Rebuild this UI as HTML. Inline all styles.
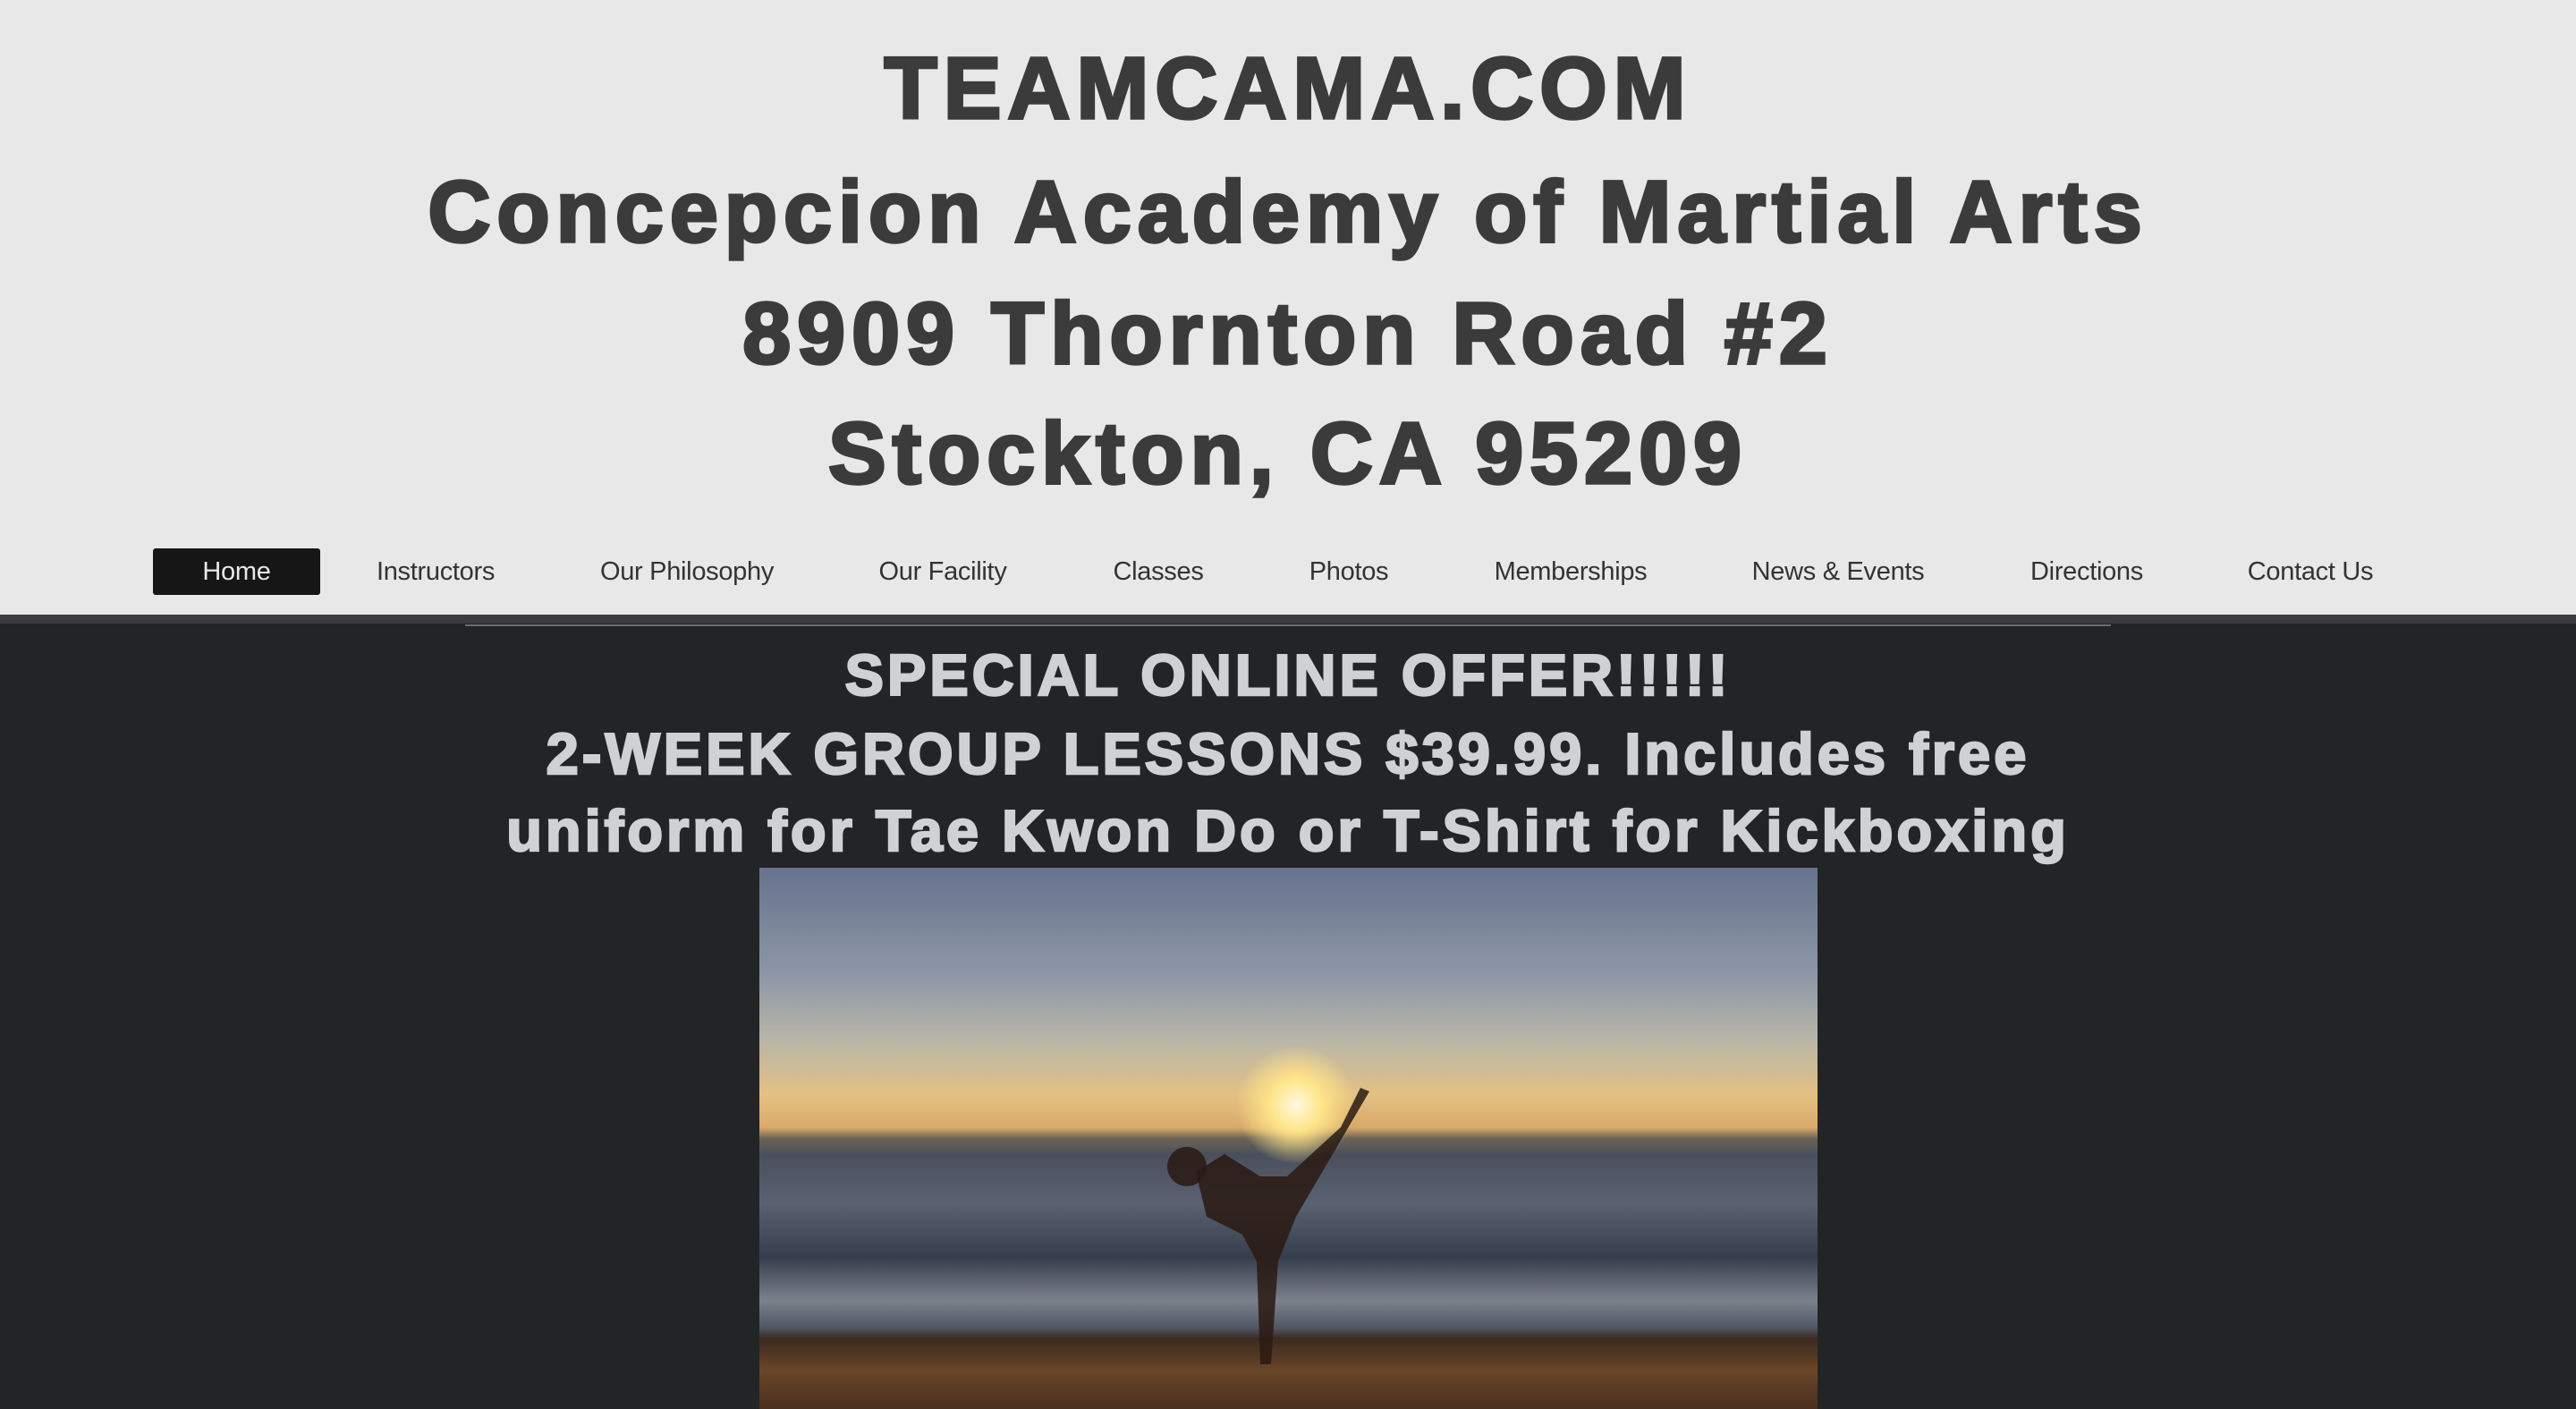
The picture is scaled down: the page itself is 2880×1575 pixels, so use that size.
<!DOCTYPE html>
<html><head><meta charset="utf-8"><style>
html,body{margin:0;padding:0;width:2880px;height:1575px;overflow:hidden;background:#232426;font-family:"Liberation Sans",Arial,sans-serif}
#hdr{position:absolute;left:0;top:0;width:2880px;height:687px;background:#e8e8e8}
.h{position:absolute;left:0;width:2880px;text-align:center;font-weight:bold;font-size:97px;color:#3b3b3b;-webkit-text-stroke:3.5px #3b3b3b;letter-spacing:7px;line-height:136px}
#stripe{position:absolute;left:0;top:687px;width:2880px;height:10px;background:#3a3c3f}
#hr{position:absolute;left:520px;top:698px;width:1840px;height:2px;background:#6a6b6e}
.n{position:absolute;top:613px;height:52px;line-height:52px;font-size:29px;color:#333;transform:translateX(-50%);white-space:nowrap;letter-spacing:-0.3px}
#home{left:171px;width:187px;background:#161616;color:#e8e8e8;border-radius:3px;text-align:center;transform:none}
.o{position:absolute;left:0;width:2880px;text-align:center;font-weight:bold;font-size:65px;color:#d0d1d3;-webkit-text-stroke:2.5px #d0d1d3;letter-spacing:4px;line-height:88px}
#img{position:absolute;left:849px;top:970px;width:1183px;height:605px;overflow:hidden;
background:linear-gradient(to bottom,#67738e 0%,#8d97a6 20%,#b9b6a8 32%,#e4c083 42%,#d9aa68 48%,#6d6456 50%,#4a4f5c 53%,#5a6272 62%,#363d4c 72%,#7c828c 80%,#505664 85%,#3a2a20 87%,#6a4628 93%,#4a3020 100%)}
</style></head><body>
<div id="hdr">
<div class="h" style="top:31px">TEAMCAMA.COM</div>
<div class="h" style="top:169px">Concepcion Academy of Martial Arts</div>
<div class="h" style="top:305px">8909 Thornton Road #2</div>
<div class="h" style="top:439px">Stockton, CA 95209</div>
<div class="n" id="home">Home</div>
<div class="n" style="left:487px">Instructors</div>
<div class="n" style="left:768px">Our Philosophy</div>
<div class="n" style="left:1054px">Our Facility</div>
<div class="n" style="left:1295px">Classes</div>
<div class="n" style="left:1508px">Photos</div>
<div class="n" style="left:1756px">Memberships</div>
<div class="n" style="left:2055px">News &amp; Events</div>
<div class="n" style="left:2333px">Directions</div>
<div class="n" style="left:2583px">Contact Us</div>
</div>
<div id="stripe"></div>
<div id="hr"></div>
<div class="o" style="top:711px">SPECIAL ONLINE OFFER!!!!!</div>
<div class="o" style="top:799px">2-WEEK GROUP LESSONS $39.99. Includes free</div>
<div class="o" style="top:885px">uniform for Tae Kwon Do or T-Shirt for Kickboxing</div>
<div id="img">
<div style="position:absolute;left:530px;top:200px;width:140px;height:130px;border-radius:50%;background:radial-gradient(circle,#fffbe0 0%,#ffe48a 30%,rgba(240,190,100,0) 70%)"></div>
<svg width="1183" height="605" style="position:absolute;left:0;top:0">
<path d="M672 246 L682 250 L600 390 L580 440 L572 555 L560 555 L556 440 L540 410 L500 390 L488 340 L520 320 L560 345 L590 345 L650 290 Z" fill="#2a1a12" opacity="0.85"/>
<circle cx="478" cy="334" r="22" fill="#2a1a12" opacity="0.85"/>
</svg>
</div>
</body></html>
